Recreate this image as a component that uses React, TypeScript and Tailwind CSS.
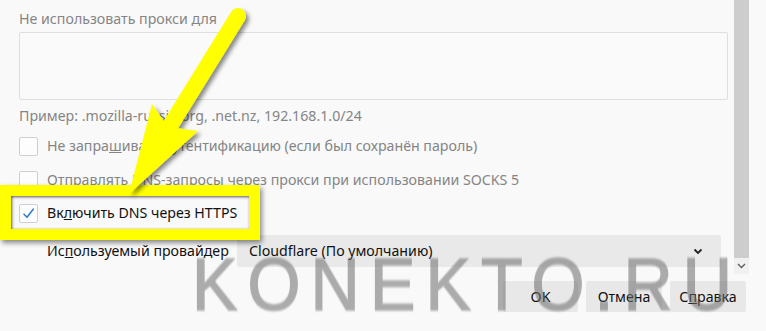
import React from "react";

const font = { fontFamily: '"Noto Sans", "Open Sans", sans-serif' };

function Checkbox({ checked }: { checked?: boolean }) {
  return (
    <div className="w-[19px] h-[19px] shrink-0 rounded-[2px] border border-[#cfcfcf] bg-[#fdfdfd] flex items-center justify-center">
      {checked && (
        <svg width="13" height="13" viewBox="0 0 13 13">
          <path d="M2 7.2 L5 10.3 L11.2 2.2" fill="none" stroke="#2f7fd0" strokeWidth="1.6" strokeLinecap="round" strokeLinejoin="round" />
        </svg>
      )}
    </div>
  );
}

export default function App() {
  return (
    <div className="relative w-[766px] h-[331px] overflow-hidden bg-[#f9f9f9] text-[14.2px]" style={font}>
      <div className="flex h-[274px]">
        <div className="w-[734px] pl-[19px] pr-[6px] pt-[9px] flex flex-col">
          <div className="h-5 leading-5 text-[#858585]">Не использовать прокси для</div>
          <div className="mt-[3px] h-[68px] rounded-[2px] border border-[#dedede] bg-[#fafafa]" />
          <div className="mt-[6px] h-5 leading-5 text-[#858585]">Пример: .mozilla-russia.org, .net.nz, 192.168.1.0/24</div>
          <div className="mt-[10px] flex items-center gap-[9px] h-5">
            <Checkbox />
            <span className="leading-5 text-[#858585]">
              Не запра<span className="underline">ш</span>ивать аутентификацию (если был сохранён пароль)
            </span>
          </div>
          <div className="mt-[14px] flex items-center gap-[9px] h-5">
            <Checkbox />
            <span className="leading-5 text-[#858585]">Отправлять DNS-запросы через прокси при использовании SOCKS 5</span>
          </div>
          <div className="mt-[13px] flex items-center gap-[9px] h-5">
            <Checkbox checked />
            <span className="leading-5 text-[#111]">
              Вк<span className="underline">л</span>ючить DNS через HTTPS
            </span>
          </div>
          <div className="mt-[12px] flex items-center pl-[28px] h-[32px] pr-[7px]">
            <span className="w-[190px] text-[#111]">
              Ис<span className="underline">п</span>ользуемый провайдер
            </span>
            <div className="flex-1 h-[32px] rounded-[2px] bg-[#e9e9e9] flex items-center pl-[12px] pr-[18px] justify-between">
              <span className="text-[#111]">Cloudflare (По умолчанию)</span>
              <svg width="10" height="7" viewBox="0 0 10 7">
                <path d="M1.5 1.5 L5 5 L8.5 1.5" fill="none" stroke="#222" strokeWidth="1.8" />
              </svg>
            </div>
          </div>
        </div>
        <div className="w-[15px] flex flex-col">
          <div className="flex-1 bg-[#cdcdcd]" />
          <div className="h-[16px] bg-[#f0f0f0] flex items-center justify-center">
            <svg width="9" height="6" viewBox="0 0 9 6">
              <path d="M1 1 L4.5 4.5 L8 1" fill="none" stroke="#606060" strokeWidth="1.4" />
            </svg>
          </div>
        </div>
        <div className="flex-1" />
      </div>
      <div className="flex justify-end gap-[8px] pr-[20px] pt-[7px]">
        <button className="w-[75px] h-[31px] rounded-[2px] bg-[#e8e8e8] text-[#111]">OK</button>
        <button className="w-[76px] h-[31px] rounded-[2px] bg-[#e8e8e8] text-[#111]">Отмена</button>
        <button className="w-[76px] h-[31px] rounded-[2px] bg-[#e8e8e8] text-[#111]">
          С<span className="underline">п</span>равка
        </button>
      </div>

      {/* watermark */}
      <div
        className="absolute left-[192px] top-[248px] origin-left scale-x-[0.92] text-[74px] leading-[74px] tracking-[11px] text-[#6c6c6c] [-webkit-text-stroke:1.5px_#6c6c6c] opacity-55 blur-[0.8px] pointer-events-none whitespace-nowrap"
        style={{ fontFamily: '"Liberation Sans", Arial, sans-serif' }}
      >
        KONEKTO.RU
      </div>

      {/* yellow highlight frame */}
      <div className="absolute left-0 top-[185px] w-[260px] h-[55px] border-[11px] border-[#ffff00] shadow-[2px_3px_5px_rgba(0,0,0,0.45),inset_1px_1px_3px_rgba(0,0,0,0.65)] pointer-events-none" />

      {/* arrow */}
      <svg className="absolute left-0 top-0 pointer-events-none" width="766" height="331" viewBox="0 0 766 331">
        <defs>
          <filter id="sh" x="-20%" y="-20%" width="140%" height="140%">
            <feDropShadow dx="3" dy="3" stdDeviation="2" floodColor="#000" floodOpacity="0.45" />
          </filter>
        </defs>
        <g filter="url(#sh)">
          <line x1="238" y1="16" x2="170" y2="126" stroke="#ffff00" strokeWidth="16" strokeLinecap="round" />
          <polygon points="129,194 152,104 168,127 198,131" fill="#ffff00" />
        </g>
      </svg>
    </div>
  );
}
